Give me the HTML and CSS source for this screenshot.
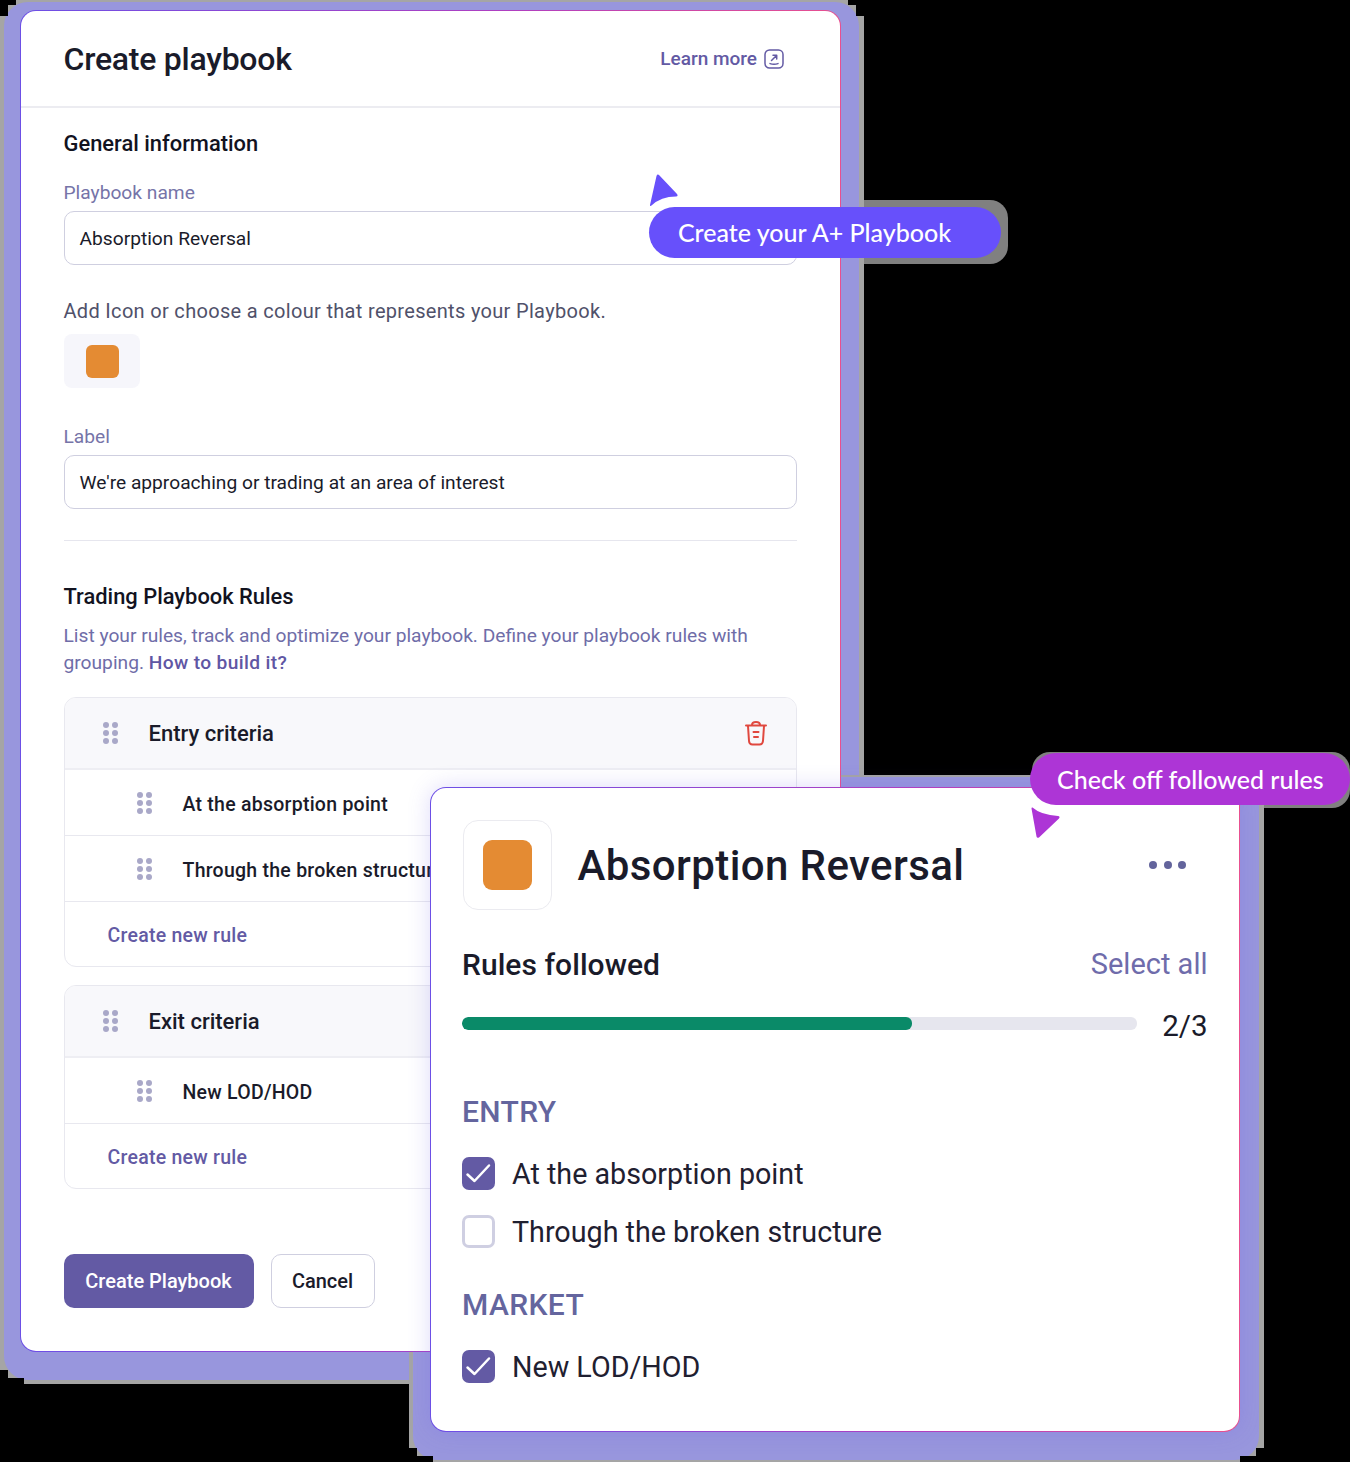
FILE: index.html
```html
<!DOCTYPE html>
<html>
<head>
    <meta charset="UTF-8">
    <title>Create playbook</title>
    <link rel="stylesheet" href="styles.css">
</head>
<body>

<!-- flat glow behind the two windows -->
<div class="tip-fringe tip-fringe-blue"></div>
<div class="tip-fringe tip-fringe-purple"></div>
<div class="halo halo-left"></div>
<div class="halo halo-right"></div>

<section class="card card-form">
    <header class="form-head">
        <h1>Create playbook</h1>
        <a class="learn">Learn more
            <svg width="20" height="20" viewBox="0 0 20 20" fill="none" stroke="#635aa4" stroke-width="1.5" stroke-linecap="round" stroke-linejoin="round">
                <rect x="1" y="1" width="18" height="18" rx="4.5"/>
                <path d="M7.5 11.5 L12.5 6.5 M9 6.3 H12.7 V10 M6 14.6 C8.5 15.4 11.500 15.4 14 14.600"/>
            </svg>
        </a>
    </header>

    <div class="form-body">
        <h2 class="sub first">General information</h2>
        <label class="field-label">Playbook name</label>
        <div class="field-box">Absorption Reversal</div>

        <p class="hint">Add Icon or choose a colour that represents your Playbook.</p>
        <div class="swatch"><span></span></div>

        <label class="field-label label-second">Label</label>
        <div class="field-box">We're approaching or trading at an area of interest</div>

        <hr class="divider">

        <h2 class="sub">Trading Playbook Rules</h2>
        <p class="intro">List your rules, track and optimize your playbook. Define your playbook rules with<br>grouping. <b>How to build it?</b></p>

        <div class="group">
            <div class="group-head">
                <svg class="grip" width="15" height="22" viewBox="0 0 15 22" fill="#a9a8c8"><circle cx="3" cy="3" r="3"/><circle cx="12" cy="3" r="3"/><circle cx="3" cy="11" r="3"/><circle cx="12" cy="11" r="3"/><circle cx="3" cy="19" r="3"/><circle cx="12" cy="19" r="3"/></svg>
                <span>Entry criteria</span>
                <svg class="trash" width="24" height="26" viewBox="0 0 24 26" fill="none" stroke="#e0483f" stroke-width="2" stroke-linecap="round" stroke-linejoin="round">
                    <path d="M2 5.500 H22 M8 5 C8 1 16 1 16 5 M4 6 L5 21 C5.200 23.500 6.500 24.500 8.500 24.500 H15.500 C17.500 24.500 18.800 23.500 19 21 L20 6 M9.500 12 H14.500 M10 17 H14"/>
                </svg>
            </div>
            <div class="rule">
                <svg class="grip" width="15" height="22" viewBox="0 0 15 22" fill="#a9a8c8"><circle cx="3" cy="3" r="3"/><circle cx="12" cy="3" r="3"/><circle cx="3" cy="11" r="3"/><circle cx="12" cy="11" r="3"/><circle cx="3" cy="19" r="3"/><circle cx="12" cy="19" r="3"/></svg>
                <span>At the absorption point</span>
            </div>
            <div class="rule">
                <svg class="grip" width="15" height="22" viewBox="0 0 15 22" fill="#a9a8c8"><circle cx="3" cy="3" r="3"/><circle cx="12" cy="3" r="3"/><circle cx="3" cy="11" r="3"/><circle cx="12" cy="11" r="3"/><circle cx="3" cy="19" r="3"/><circle cx="12" cy="19" r="3"/></svg>
                <span>Through the broken structure</span>
            </div>
            <div class="new-rule">Create new rule</div>
        </div>

        <div class="group group-exit">
            <div class="group-head">
                <svg class="grip" width="15" height="22" viewBox="0 0 15 22" fill="#a9a8c8"><circle cx="3" cy="3" r="3"/><circle cx="12" cy="3" r="3"/><circle cx="3" cy="11" r="3"/><circle cx="12" cy="11" r="3"/><circle cx="3" cy="19" r="3"/><circle cx="12" cy="19" r="3"/></svg>
                <span>Exit criteria</span>
            </div>
            <div class="rule">
                <svg class="grip" width="15" height="22" viewBox="0 0 15 22" fill="#a9a8c8"><circle cx="3" cy="3" r="3"/><circle cx="12" cy="3" r="3"/><circle cx="3" cy="11" r="3"/><circle cx="12" cy="11" r="3"/><circle cx="3" cy="19" r="3"/><circle cx="12" cy="19" r="3"/></svg>
                <span>New LOD/HOD</span>
            </div>
            <div class="new-rule">Create new rule</div>
        </div>

        <div class="actions">
            <button class="btn-main" type="button">Create Playbook</button>
            <button class="btn-cancel" type="button">Cancel</button>
        </div>
    </div>
</section>

<section class="card card-check">
    <div class="check-head">
        <div class="check-icon"><span></span></div>
        <h2>Absorption Reversal</h2>
        <div class="dots"><i></i><i></i><i></i></div>
    </div>

    <div class="followed">
        <h3>Rules followed</h3>
        <a>Select all</a>
    </div>
    <div class="progress">
        <div class="track"><div class="fill" style="width: 66.6%"></div></div>
        <span>2/3</span>
    </div>

    <h4 class="cat">ENTRY</h4>
    <div class="check-row">
        <span class="box on"><svg width="33" height="33" viewBox="0 0 33 33" fill="none" stroke="#fff" stroke-width="2.500" stroke-linecap="round" stroke-linejoin="round"><path d="M5.500 17.500 L12.500 24 L27 8.500"/></svg></span>
        At the absorption point
    </div>
    <div class="check-row">
        <span class="box"></span>
        Through the broken structure
    </div>

    <h4 class="cat cat-market">MARKET</h4>
    <div class="check-row">
        <span class="box on"><svg width="33" height="33" viewBox="0 0 33 33" fill="none" stroke="#fff" stroke-width="2.500" stroke-linecap="round" stroke-linejoin="round"><path d="M5.500 17.500 L12.500 24 L27 8.500"/></svg></span>
        New LOD/HOD
    </div>
</section>

<!-- callouts -->
<svg class="arrow arrow-blue" width="30" height="32" viewBox="0 0 30 32" fill="#6750fb"><path d="M1 31 L7.500 2 Q8.500 -0.500 10.500 1.500 L28 20 Q29.500 22.500 27 22.500 Q12 22.500 2.500 31.500 Q0.700 32.500 1 31 Z"/></svg>
<div class="tip tip-blue">Create your A+ Playbook</div>

<svg class="arrow arrow-purple" width="30" height="32" viewBox="0 0 30 32" fill="#ad35d6"><path d="M1.500 0.500 Q10 8 27 9 Q29.500 9.500 28 11.500 L8 30.500 Q6 31.500 5.500 29.500 L0.500 1.500 Q0.500 0 1.500 0.500 Z"/></svg>
<div class="tip tip-purple">Check off followed rules</div>

</body>
</html>
```

FILE: styles.css
```css
* {
    box-sizing: border-box;
}
html, body {
    margin: 0;
    background-color: #000000;
}
body {
    position: relative;
    width: 1350px;
    height: 1462px;
    overflow: hidden;
    font-family: Roboto, "Liberation Sans", sans-serif;
    color: #1a1b2a;
}

/* glow: gray fringe with stepped corners, lavender on top */
.halo {
    position: absolute;
    background-color: #a5a5a5;
    clip-path: polygon(
        16px 0, calc(100% - 16px) 0, calc(100% - 16px) 5px, calc(100% - 8px) 5px, calc(100% - 8px) 16px, 100% 16px,
        100% calc(100% - 14px), calc(100% - 8px) calc(100% - 14px), calc(100% - 8px) calc(100% - 6px), calc(100% - 24px) calc(100% - 6px), calc(100% - 24px) 100%,
        24px 100%, 24px calc(100% - 6px), 8px calc(100% - 6px), 8px calc(100% - 14px), 0 calc(100% - 14px),
        0 16px, 8px 16px, 8px 5px, 16px 5px
    );
}
.halo::before {
    content: "";
    position: absolute;
    inset: 2px 5px 4px 4px;
    background-color: #9896dd;
    border-radius: 24px;
}
.halo-left {
    left: 0;
    top: 0;
    width: 864px;
    height: 1384px;
}
.halo-right {
    left: 409px;
    top: 775px;
    width: 855px;
    height: 687px;
}
.halo-right::before {
    bottom: 2px;
}
.tip-fringe {
    position: absolute;
    background-color: #808080;
    border-radius: 18px;
}
.tip-fringe-blue {
    left: 840px;
    top: 200px;
    width: 168px;
    height: 64px;
}
.tip-fringe-purple {
    left: 1032px;
    top: 752px;
    width: 318px;
    height: 56px;
}

/* windows */
.card {
    position: absolute;
    background: linear-gradient(#ffffff, #ffffff) padding-box,
                linear-gradient(90deg, #6c4fe6, #b03fc0 60%, #e8508f) border-box;
    border: 1.5px solid transparent;
    border-radius: 16px;
}
.card-form {
    left: 20px;
    top: 10px;
    width: 821px;
    height: 1342px;
}
.card-check {
    left: 430px;
    top: 787px;
    width: 810px;
    height: 645px;
    padding: 32px 31.500px 0 31px;
    box-shadow: 0 0 22px rgba(105, 90, 230, 0.22);
}

/* form header */
.form-head {
    display: flex;
    justify-content: space-between;
    align-items: center;
    height: 97px;
    padding: 0 56px 0 42.500px;
    border-bottom: 2px solid #ececf1;
}
.form-head h1 {
    margin: 0;
    font-size: 32px;
    font-weight: 500;
    letter-spacing: -0.25px;
}
.learn {
    display: flex;
    align-items: center;
    gap: 7px;
    color: #635aa4;
    font-size: 19px;
    font-weight: 500;
}

/* form body */
.form-body {
    padding: 0 43px 0 42.500px;
}
.sub {
    margin: 0;
    font-size: 21.900px;
    font-weight: 500;
    line-height: 30px;
    color: #12131f;
    padding-top: 41px;
}
.sub.first {
    padding-top: 21px;
}
.field-label {
    display: block;
    margin-top: 21px;
    font-size: 19.200px;
    line-height: 26px;
    color: #7674a8;
}
.label-second {
    margin-top: 36px;
}
.field-box {
    height: 54px;
    margin-top: 5px;
    padding: 0 15px;
    display: flex;
    align-items: center;
    border: 1px solid #cfcfe0;
    border-radius: 10px;
    font-size: 19.200px;
}
.hint {
    margin: 33px 0 0;
    font-size: 20px;
    line-height: 26px;
    letter-spacing: 0.32px;
    color: #50516a;
}
.swatch {
    width: 76px;
    height: 54px;
    margin-top: 10px;
    display: flex;
    align-items: center;
    justify-content: center;
    background-color: #f6f6fb;
    border-radius: 8px;
}
.swatch span {
    width: 33px;
    height: 33px;
    margin-left: 1px;
    background-color: #e48b33;
    border-radius: 6px;
}
.divider {
    margin: 31px 0 0;
    border: 0;
    border-top: 1px solid #e6e6ee;
}
.intro {
    margin: 10px 0 0;
    font-size: 19.200px;
    line-height: 27px;
    color: #6f6da8;
}
.intro b {
    font-weight: 500;
    color: #5f56a4;
    letter-spacing: 0.35px;
}

/* rule groups */
.group {
    margin-top: 21px;
    border: 1px solid #e8e8ef;
    border-radius: 12px;
    overflow: hidden;
}
.group-exit {
    margin-top: 18px;
}
.group-head {
    display: flex;
    align-items: center;
    height: 72px;
    padding: 0 28px 0 38px;
    background-color: #f8f8fb;
    border-bottom: 2px solid #eeeef3;
    font-size: 22px;
    font-weight: 500;
}
.group-head span {
    flex: 1;
    margin-left: 31px;
}
.rule {
    display: flex;
    align-items: center;
    height: 66px;
    padding-left: 72px;
    border-bottom: 1px solid #e8e8ef;
    font-size: 19.500px;
    font-weight: 500;
    letter-spacing: 0.25px;
}
.rule span {
    margin-left: 31px;
    padding-top: 3px;
    white-space: nowrap;
}
.new-rule {
    height: 64px;
    display: flex;
    align-items: center;
    padding: 2px 0 0 43px;
    color: #635aa4;
    font-size: 19.500px;
    font-weight: 500;
    letter-spacing: 0.25px;
}

/* buttons */
.actions {
    display: flex;
    gap: 17px;
    margin-top: 65px;
}
.actions button {
    height: 54px;
    border-radius: 10px;
    font-family: Roboto, "Liberation Sans", sans-serif;
    font-size: 20px;
    font-weight: 500;
}
.btn-main {
    width: 190px;
    border: 0;
    background-color: #635aa4;
    color: #ffffff;
}
.btn-cancel {
    width: 104px;
    border: 1px solid #cfcfe0;
    background-color: #ffffff;
    color: #1a1b2a;
}

/* checklist window */
.check-head {
    display: flex;
    align-items: center;
}
.check-icon {
    width: 89px;
    height: 90px;
    margin-left: 1px;
    display: flex;
    align-items: center;
    justify-content: center;
    border: 1.500px solid #ebebf0;
    border-radius: 15px;
}
.check-icon span {
    width: 49px;
    height: 50px;
    background-color: #e48b33;
    border-radius: 9px;
}
.check-head h2 {
    flex: 1;
    margin: 0 0 0 25.500px;
    font-size: 42px;
    font-weight: 500;
    letter-spacing: 0.4px;
}
.dots {
    display: flex;
    gap: 6.500px;
    margin-right: 21.500px;
}
.dots i {
    width: 8px;
    height: 8px;
    border-radius: 50%;
    background-color: #63649c;
}
.followed {
    display: flex;
    justify-content: space-between;
    align-items: center;
    margin-top: 35px;
    height: 38px;
}
.followed h3 {
    margin: 0;
    font-size: 30px;
    font-weight: 500;
    letter-spacing: 0.05px;
}
.followed a {
    font-size: 29px;
    color: #6f6cab;
}
.progress {
    display: flex;
    align-items: center;
    gap: 25px;
    margin-top: 24px;
    height: 38px;
}
.track {
    flex: 1;
    height: 13px;
    margin-top: -5px;
    border-radius: 6px;
    background-color: #e6e6ee;
    overflow: hidden;
}
.fill {
    height: 100%;
    background-color: #0a8a68;
    border-radius: 6px;
}
.progress span {
    font-size: 29.500px;
}
.cat {
    margin: 48px 0 0;
    font-size: 30px;
    line-height: 38px;
    font-weight: 500;
    letter-spacing: 0.4px;
    color: #64659e;
}
.cat-market {
    margin-top: 38px;
}
.check-row {
    display: flex;
    align-items: center;
    gap: 17px;
    height: 33px;
    margin-top: 26px;
    font-size: 28.700px;
    color: #1f2030;
}
.box {
    width: 33px;
    height: 33px;
    border: 3px solid #cfcfe2;
    border-radius: 7px;
}
.box.on {
    border: 0;
    background-color: #635aa4;
}
.box svg {
    display: block;
}
.check-row + .check-row {
    margin-top: 25px;
}

/* callouts */
.tip {
    position: absolute;
    display: flex;
    align-items: center;
    color: #ffffff;
    font-family: Lato, sans-serif;
    font-weight: 500;
    font-size: 25px;
    white-space: nowrap;
}
.tip-blue {
    left: 649px;
    top: 207px;
    width: 352px;
    height: 51px;
    padding: 0 0 2px 29px;
    border-radius: 26px;
    background-color: #6750fb;
}
.tip-purple {
    left: 1030px;
    top: 753px;
    width: 320px;
    height: 52px;
    padding-left: 27px;
    border-radius: 26px;
    background-color: #ad35d6;
}
.arrow {
    position: absolute;
}
.arrow-blue {
    left: 649px;
    top: 174px;
}
.arrow-purple {
    left: 1031px;
    top: 807px;
}
```
